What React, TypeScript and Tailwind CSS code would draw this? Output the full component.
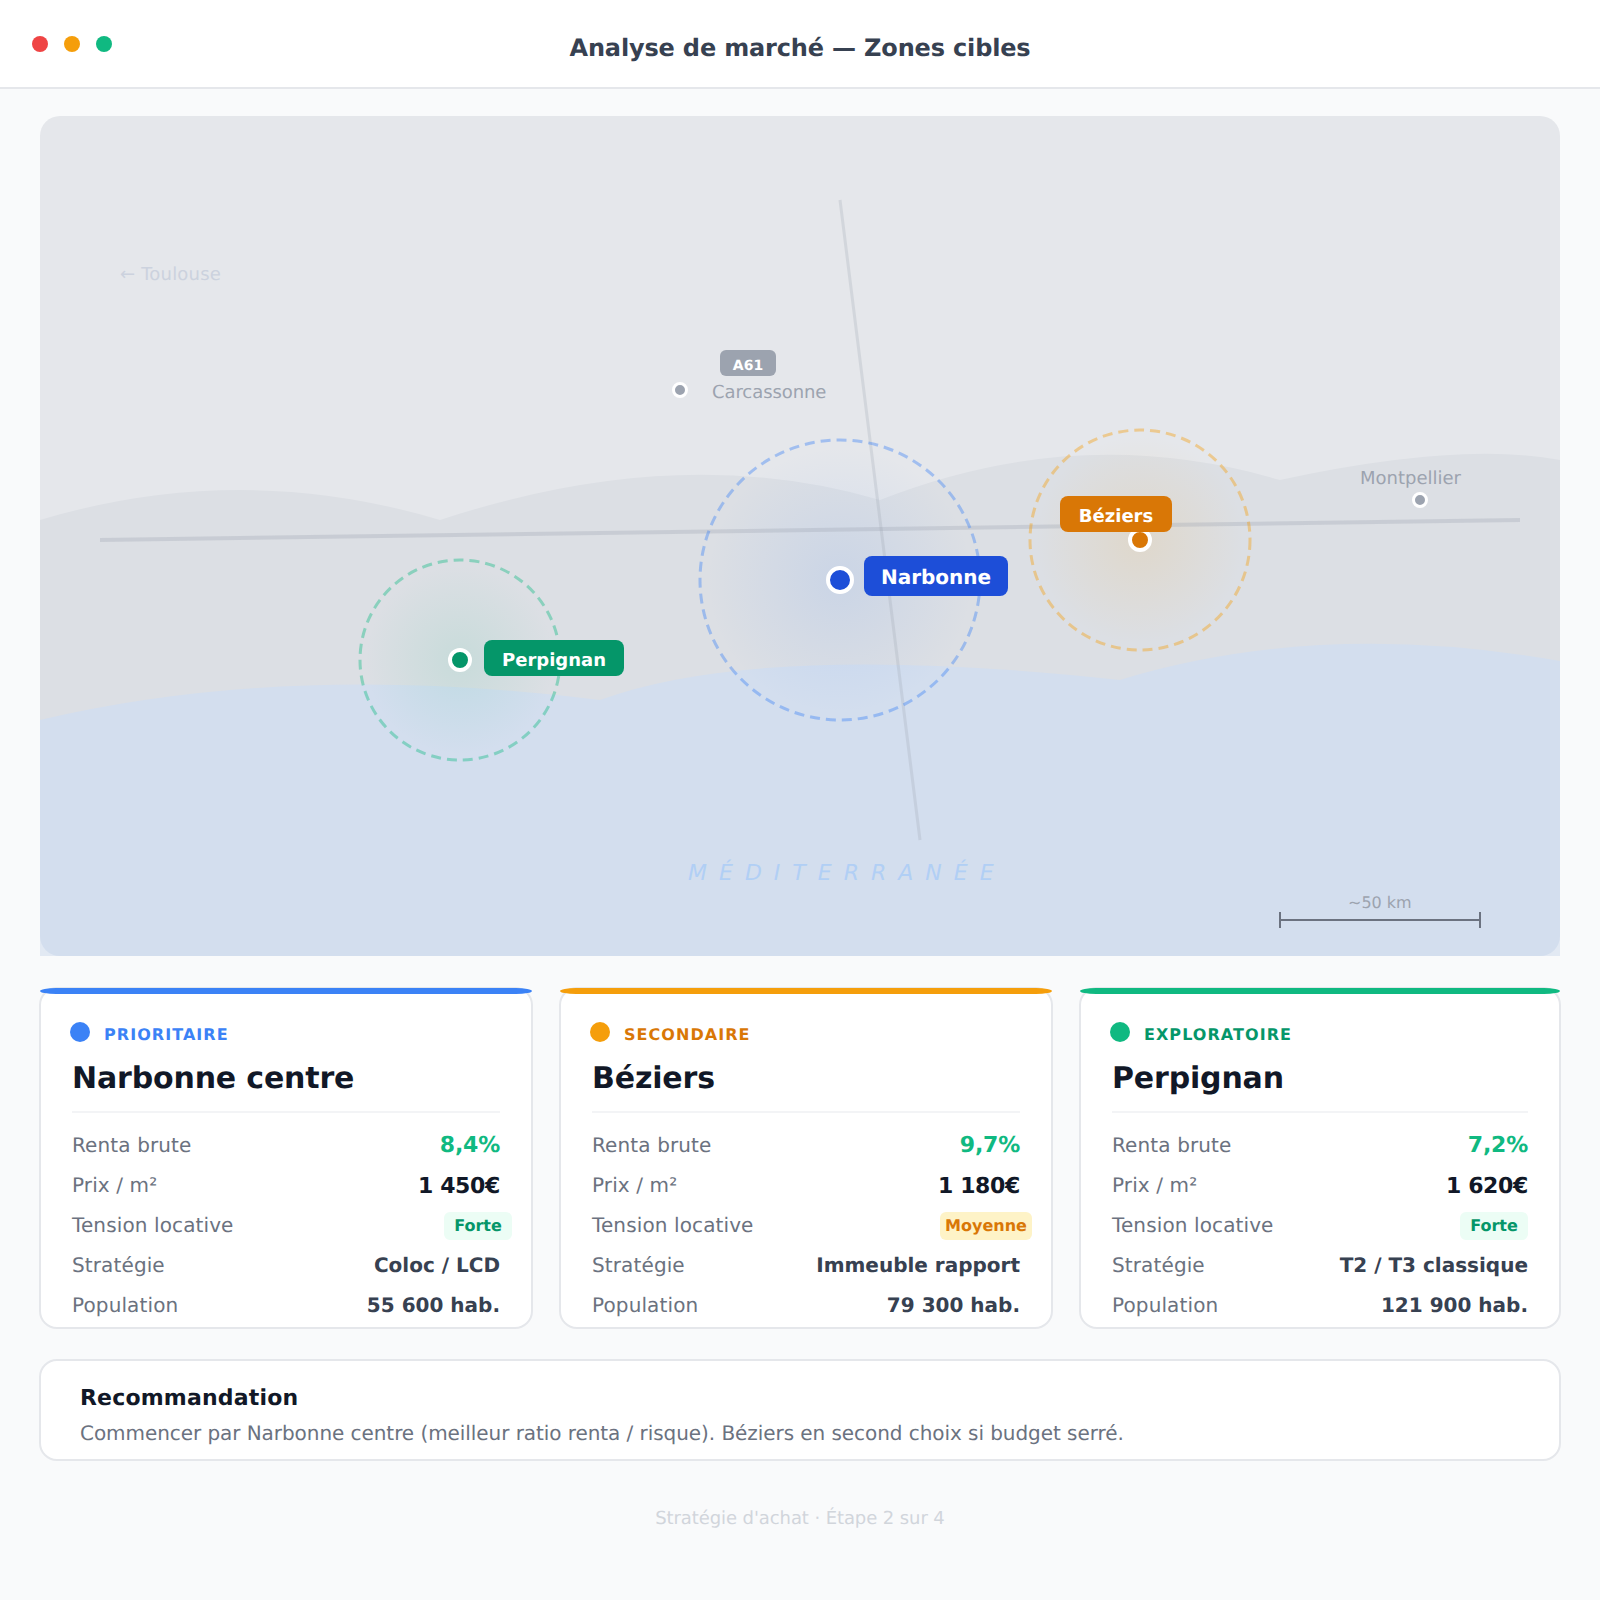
const zones = [
  {
    tag: "PRIORITAIRE",
    tagColor: "text-[#3b82f6]",
    dot: "bg-[#3b82f6]",
    title: "Narbonne centre",
    renta: "8,4%",
    prix: "1 450€",
    tension: "Forte",
    pill: "w-[68px] -mr-3 bg-[#ecfdf5] text-[#059669]",
    strategie: "Coloc / LCD",
    population: "55 600 hab.",
  },
  {
    tag: "SECONDAIRE",
    tagColor: "text-[#d97706]",
    dot: "bg-[#f59e0b]",
    title: "Béziers",
    renta: "9,7%",
    prix: "1 180€",
    tension: "Moyenne",
    pill: "w-[92px] -mr-3 bg-[#fef3c7] text-[#d97706]",
    strategie: "Immeuble rapport",
    population: "79 300 hab.",
  },
  {
    tag: "EXPLORATOIRE",
    tagColor: "text-[#059669]",
    dot: "bg-[#10b981]",
    title: "Perpignan",
    renta: "7,2%",
    prix: "1 620€",
    tension: "Forte",
    pill: "w-[68px] bg-[#ecfdf5] text-[#059669]",
    strategie: "T2 / T3 classique",
    population: "121 900 hab.",
  },
]

function Row({ label, children }: { label: string; children: React.ReactNode }) {
  return (
    <div className="flex h-10 items-center justify-between">
      <span className="text-[20px] tracking-[0.12px] text-[#6b7280]">{label}</span>
      {children}
    </div>
  )
}

function ZoneCard({ zone }: { zone: (typeof zones)[number] }) {
  return (
    <div className="relative -m-px rounded-[18px] border-2 border-[#e5e7eb] bg-white px-[31px] pt-[33px] pb-[2px]">
      <div className={`absolute -top-px -right-px -left-px h-[6px] rounded-[16px/3px] ${zone.dot}`} />
      <div className="-ml-[2px] flex items-start gap-[14px]">
        <span className={`h-5 w-5 rounded-full ${zone.dot}`} />
        <span className={`mt-px text-[16px] leading-6 font-bold tracking-[1.05px] ${zone.tagColor}`}>{zone.tag}</span>
      </div>
      <h3 className="mt-[14px] text-[30px] leading-9 font-bold tracking-[-0.16px] text-[#111827]">{zone.title}</h3>
      <div className="mt-[14px] mb-3 h-[2px] bg-[#f3f4f6]" />
      <Row label="Renta brute">
        <span className="text-[22px] font-bold tracking-[-0.2px] text-[#10b981]">{zone.renta}</span>
      </Row>
      <Row label="Prix / m²">
        <span className="mt-[2px] text-[22px] font-bold tracking-[-0.35px] text-[#111827]">{zone.prix}</span>
      </Row>
      <Row label="Tension locative">
        <span className={`mt-[2px] flex h-7 items-center justify-center rounded-md text-[16px] font-bold ${zone.pill}`}>
          {zone.tension}
        </span>
      </Row>
      <Row label="Stratégie">
        <span className="text-[20px] font-bold text-[#374151]">{zone.strategie}</span>
      </Row>
      <Row label="Population">
        <span className="text-[20px] font-bold text-[#374151]">{zone.population}</span>
      </Row>
    </div>
  )
}

function MapView() {
  return (
    <div className="relative h-[840px] rounded-[20px] bg-[#e5e7eb]">
      <svg className="absolute inset-0 h-full w-full" viewBox="0 0 1520 840" fill="none">
        <defs>
          <radialGradient id="glowBlue">
            <stop offset="0%" stopColor="#3b82f6" stopOpacity="0.11" />
            <stop offset="95%" stopColor="#3b82f6" stopOpacity="0" />
          </radialGradient>
          <radialGradient id="glowAmber">
            <stop offset="0%" stopColor="#f59e0b" stopOpacity="0.115" />
            <stop offset="95%" stopColor="#f59e0b" stopOpacity="0" />
          </radialGradient>
          <radialGradient id="glowGreen">
            <stop offset="0%" stopColor="#10b981" stopOpacity="0.1" />
            <stop offset="95%" stopColor="#10b981" stopOpacity="0" />
          </radialGradient>
        </defs>
        {/* land */}
        <path
          d="M0 404 Q200 344 400 404 Q640 325 840 384 Q1040 305 1240 364 Q1420 325 1520 344 L1520 700 L0 700 Z"
          fill="#dcdfe4"
        />
        {/* sea */}
        <path
          d="M0 604 Q250 545 560 584 Q720 525 1080 564 Q1280 503 1520 545 L1520 840 L0 840 Z"
          fill="#d3deee"
        />
        <path d="M0 820 A20 20 0 0 0 20 840 L0 840 Z" fill="#e2e9f3" />
        <path d="M1520 820 A20 20 0 0 1 1500 840 L1520 840 Z" fill="#e2e9f3" />
        {/* zones */}
        <circle cx="800" cy="464" r="140" fill="url(#glowBlue)" />
        <circle cx="1100" cy="424" r="110" fill="url(#glowAmber)" />
        <circle cx="420" cy="544" r="100" fill="url(#glowGreen)" />
        {/* roads */}
        <line x1="60" y1="424" x2="1480" y2="404" stroke="#9ca3af" strokeWidth="4" opacity="0.3" />
        <line x1="800" y1="84" x2="880" y2="724" stroke="#9ca3af" strokeWidth="3" opacity="0.25" />
        <circle cx="800" cy="464" r="140" stroke="#3b82f6" strokeOpacity="0.4" strokeWidth="3" strokeDasharray="10 6" />
        <circle cx="1100" cy="424" r="110" stroke="#f59e0b" strokeOpacity="0.4" strokeWidth="3" strokeDasharray="10 6" />
        <circle cx="420" cy="544" r="100" stroke="#10b981" strokeOpacity="0.4" strokeWidth="3" strokeDasharray="10 6" />
        {/* markers */}
        <circle cx="800" cy="464" r="12" fill="#1d4ed8" stroke="#fff" strokeWidth="4" />
        <circle cx="1100" cy="424" r="10" fill="#d97706" stroke="#fff" strokeWidth="4" />
        <circle cx="420" cy="544" r="10" fill="#059669" stroke="#fff" strokeWidth="4" />
        <circle cx="640" cy="274" r="6.5" fill="#9ca3af" stroke="#fff" strokeWidth="3" />
        <circle cx="1380" cy="384" r="6.5" fill="#9ca3af" stroke="#fff" strokeWidth="3" />
        {/* scale */}
        <path d="M1240 804 H1440 M1240 796 V812 M1440 796 V812" stroke="#6b7280" strokeWidth="2" />
      </svg>

      <span className="absolute top-[148px] left-[80px] text-[18px] leading-[22px] tracking-[0.2px] text-[#ccd2de]">
        ← Toulouse
      </span>
      <span className="absolute top-[234px] left-[680px] flex h-[26px] w-14 items-center justify-center rounded-md bg-[#9ca3af] pt-[6px] text-[14px] font-bold text-white">
        A61
      </span>
      <span className="absolute top-[266px] left-[672px] text-[18px] leading-[22px] tracking-[-0.08px] text-[#9ca3af]">
        Carcassonne
      </span>
      <span className="absolute top-[352px] left-[1320px] text-[18px] leading-[22px] text-[#9ca3af]">Montpellier</span>

      <span className="absolute top-[440px] left-[824px] flex h-10 w-[144px] items-center justify-center rounded-lg bg-[#1d4ed8] pt-[2px] text-[20px] font-bold text-white">
        Narbonne
      </span>
      <span className="absolute top-[380px] left-[1020px] flex h-9 w-[112px] items-center justify-center rounded-lg bg-[#d97706] pt-[4px] text-[18px] font-bold text-white">
        Béziers
      </span>
      <span className="absolute top-[524px] left-[444px] flex h-9 w-[140px] items-center justify-center rounded-lg bg-[#059669] pt-[4px] text-[18px] font-bold text-white">
        Perpignan
      </span>

      <span className="absolute top-[745px] left-[648px] text-[22px] leading-[26px] tracking-[12px] text-[#b1cff5] italic">
        MÉDITERRANÉE
      </span>
      <span className="absolute top-[777px] left-[1308px] text-[16px] leading-5 text-[#9ca3af]">~50 km</span>
    </div>
  )
}

export default function App() {
  return (
    <div className="min-h-[1600px] w-[1600px] bg-[#f9fafb] font-['DejaVu_Sans',sans-serif] [text-rendering:geometricPrecision]">
      <header className="grid h-[89px] grid-cols-[1fr_auto_1fr] items-start border-b-2 border-[#e5e7eb] bg-white">
        <div className="mt-9 flex gap-4 pl-8">
          <span className="h-4 w-4 rounded-full bg-[#ef4444]" />
          <span className="h-4 w-4 rounded-full bg-[#f59e0b]" />
          <span className="h-4 w-4 rounded-full bg-[#10b981]" />
        </div>
        <h1 className="mt-[34px] text-[24px] leading-7 font-bold tracking-[-0.16px] text-[#374151]">
          Analyse de marché — Zones cibles
        </h1>
        <div />
      </header>
      <main className="flex flex-col px-10 pt-[27px]">
        <MapView />
        <div className="mt-8 grid grid-cols-[492px_492px_480px] gap-7">
          {zones.map((zone) => (
            <ZoneCard key={zone.tag} zone={zone} />
          ))}
        </div>
        <div className="-mx-px mt-[31px] -mb-px h-[102px] rounded-[18px] border-2 border-[#e5e7eb] bg-white pt-[23px] pl-[39px]">
          <h4 className="text-[22px] leading-[30px] font-bold tracking-[0.18px] text-[#111827]">Recommandation</h4>
          <p className="mt-[5px] text-[20px] leading-7 tracking-[-0.06px] text-[#6b7280]">
            Commencer par Narbonne centre (meilleur ratio renta / risque). Béziers en second choix si budget serré.
          </p>
        </div>
        <p className="mt-[47px] text-center text-[18px] leading-6 tracking-[-0.09px] text-[#d1d5db]">
          Stratégie d'achat · Étape 2 sur 4
        </p>
      </main>
    </div>
  )
}
